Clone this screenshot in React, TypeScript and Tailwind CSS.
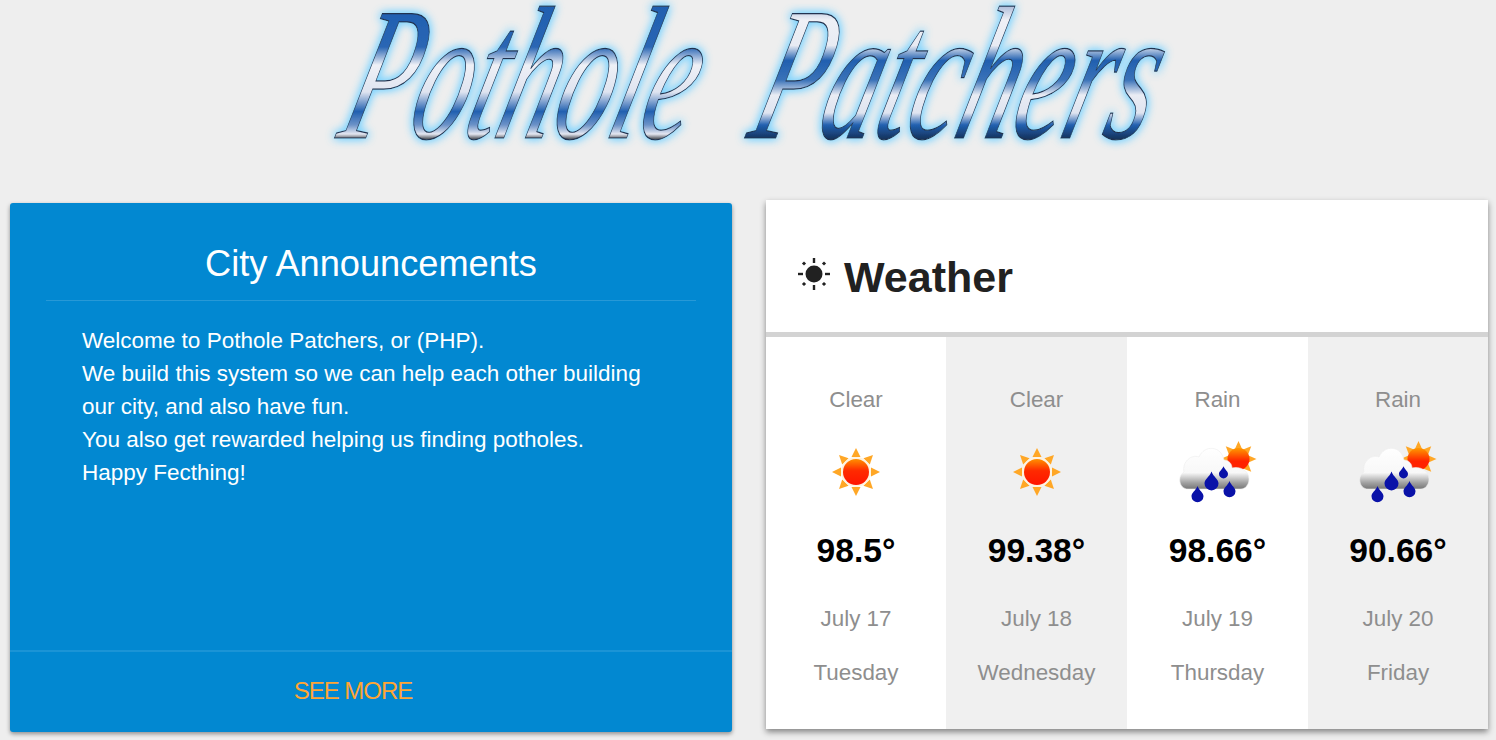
import { useId } from "react"

const days = [
    { sky: "Clear", temp: "98.5°", date: "July 17", day: "Tuesday", rain: false, shade: false },
    { sky: "Clear", temp: "99.38°", date: "July 18", day: "Wednesday", rain: false, shade: true },
    { sky: "Rain", temp: "98.66°", date: "July 19", day: "Thursday", rain: true, shade: false },
    { sky: "Rain", temp: "90.66°", date: "July 20", day: "Friday", rain: true, shade: true },
]

function Logo() {
    return (
        <svg width="860" height="170" viewBox="0 0 860 170" className="block">
            <defs>
                <linearGradient id="word1" gradientUnits="userSpaceOnUse" x1="0" y1="-133" x2="0" y2="17">
                    <stop offset="0" stopColor="#1f5fb0" />
                    <stop offset="0.28" stopColor="#2a66b4" />
                    <stop offset="0.4" stopColor="#eef0f6" />
                    <stop offset="0.58" stopColor="#dfe4f0" />
                    <stop offset="0.71" stopColor="#2160b0" />
                    <stop offset="0.8" stopColor="#6d93c8" />
                    <stop offset="0.86" stopColor="#e4e7f1" />
                    <stop offset="0.9" stopColor="#33363d" />
                </linearGradient>
                <linearGradient id="word2" gradientUnits="userSpaceOnUse" x1="0" y1="-133" x2="0" y2="17">
                    <stop offset="0" stopColor="#aab9d8" />
                    <stop offset="0.1" stopColor="#eef0f6" />
                    <stop offset="0.27" stopColor="#e8ebf3" />
                    <stop offset="0.37" stopColor="#2160b0" />
                    <stop offset="0.5" stopColor="#3a72b8" />
                    <stop offset="0.6" stopColor="#e9ecf4" />
                    <stop offset="0.72" stopColor="#dfe4f0" />
                    <stop offset="0.8" stopColor="#2160b0" />
                    <stop offset="0.89" stopColor="#16345f" />
                </linearGradient>
                <filter id="glow" x="-5%" y="-15%" width="110%" height="130%">
                    <feGaussianBlur in="SourceAlpha" stdDeviation="5" result="blur" />
                    <feFlood floodColor="#7fd4ff" />
                    <feComposite in2="blur" operator="in" result="halo" />
                    <feMerge>
                        <feMergeNode in="halo" />
                        <feMergeNode in="halo" />
                        <feMergeNode in="SourceGraphic" />
                    </feMerge>
                </filter>
            </defs>
            <g filter="url(#glow)" fontFamily="'Liberation Serif', serif" fontStyle="italic" fontSize="190" stroke="#23324f" strokeWidth="1.2">
                <text transform="translate(18 138) skewX(-16) scale(0.59 1)" fill="url(#word1)">Pothole</text>
                <text transform="translate(428 138) skewX(-16) scale(0.59 1)" fill="url(#word2)">Patchers</text>
            </g>
        </svg>
    )
}

function HeadingSun() {
    return (
        <svg width="36" height="36" viewBox="0 0 36 36" className="shrink-0" fill="#212121">
            <circle cx="18" cy="18" r="8.5" />
            <rect x="16.8" y="2" width="2.4" height="5" />
            <rect x="16.8" y="29" width="2.4" height="5" />
            <rect x="2" y="16.8" width="5" height="2.4" />
            <rect x="29" y="16.8" width="5" height="2.4" />
            <rect x="6.5" y="6" width="3" height="3" transform="rotate(45 8 7.5)" />
            <rect x="26.5" y="6" width="3" height="3" transform="rotate(45 28 7.5)" />
            <rect x="6.5" y="26.5" width="3" height="3" transform="rotate(45 8 28)" />
            <rect x="26.5" y="26.5" width="3" height="3" transform="rotate(45 28 28)" />
        </svg>
    )
}

function Rays({ cx, cy, inner, outer, half }: { cx: number; cy: number; inner: number; outer: number; half: number }) {
    return (
        <>
            {[0, 45, 90, 135, 180, 225, 270, 315].map((a) => (
                <polygon
                    key={a}
                    points={`${cx - half},${cy - inner} ${cx},${cy - outer} ${cx + half},${cy - inner}`}
                    fill="#ffa726"
                    transform={`rotate(${a} ${cx} ${cy})`}
                />
            ))}
        </>
    )
}

function SunIcon() {
    const id = useId()
    return (
        <svg width="50" height="50" viewBox="0 0 50 50" className="blur-[0.4px]">
            <defs>
                <linearGradient id={id} x1="0" y1="0" x2="0" y2="1">
                    <stop offset="0" stopColor="#ff9000" />
                    <stop offset="0.45" stopColor="#ff2a00" />
                    <stop offset="1" stopColor="#ff1500" />
                </linearGradient>
            </defs>
            <Rays cx={25} cy={25} inner={15} outer={24} half={4.5} />
            <circle cx="25" cy="25" r="15" fill="#fff3e0" />
            <circle cx="25" cy="25" r="13" fill={`url(#${id})`} />
        </svg>
    )
}

function Drop({ x, y, s }: { x: number; y: number; s: number }) {
    return (
        <path
            d={`M${x} ${y - s * 1.5} C${x + s * 0.3} ${y - s * 0.7} ${x + s} ${y - s * 0.4} ${x + s} ${y + s * 0.2} A${s} ${s} 0 1 1 ${x - s} ${y + s * 0.2} C${x - s} ${y - s * 0.4} ${x - s * 0.3} ${y - s * 0.7} ${x} ${y - s * 1.5}Z`}
            fill="#0a12a8"
        />
    )
}

function RainIcon() {
    const sun = useId()
    const cloud = useId()
    return (
        <svg width="80" height="66" viewBox="0 0 80 66" className="blur-[0.4px]">
            <defs>
                <linearGradient id={sun} x1="0" y1="0" x2="0" y2="1">
                    <stop offset="0" stopColor="#ff9a00" />
                    <stop offset="0.6" stopColor="#ff2200" />
                </linearGradient>
                <linearGradient id={cloud} x1="0" y1="0" x2="0" y2="1">
                    <stop offset="0" stopColor="#ffffff" />
                    <stop offset="0.6" stopColor="#f8f8f8" />
                    <stop offset="0.85" stopColor="#a0a0a0" />
                    <stop offset="1" stopColor="#777777" />
                </linearGradient>
            </defs>
            <Rays cx={60.5} cy={20} inner={10} outer={18} half={3.6} />
            <circle cx="60.5" cy="20" r="11" fill={`url(#${sun})`} />
            <path
                d="M10 50 C1 50 -1 37 6 33 C4 23 13 15 21 18 C26 6 43 6 46 21 C51 21 54 25 54 29 C61 27 71 31 71 40 C71 46 67 50 63 50 Z"
                fill={`url(#${cloud})`}
                stroke="#ececec"
                strokeWidth="0.6"
            />
            <Drop x={19.5} y={56} s={6} />
            <Drop x={33.5} y={43} s={7} />
            <Drop x={45.5} y={34} s={4.5} />
            <Drop x={51.5} y={51} s={6} />
        </svg>
    )
}

export default function App() {
    return (
        <div className="h-[740px] overflow-hidden bg-[#eeeeee] font-['Liberation_Sans',Arial,sans-serif]">
            <header className="flex h-[200px] justify-center pr-[2px]">
                <Logo />
            </header>
            <main className="flex items-start gap-[34px] pl-[10px] pr-[8px]">
                <section className="mt-[3px] flex h-[529px] w-[722px] flex-col rounded-[3px] bg-[#0288d1] text-white shadow-[0_2px_4px_rgba(0,0,0,0.4)]">
                    <h2 className="pt-[41px] text-center text-[36.2px] leading-[40px] font-normal">City Announcements</h2>
                    <div className="mx-[36px] mt-[16px] h-px bg-white/15"></div>
                    <div className="pl-[72px] pr-[60px] pt-[23px] text-[22.5px] leading-[33px]">
                        <p>Welcome to Pothole Patchers, or (PHP).</p>
                        <p>We build this system so we can help each other building our city, and also have fun.</p>
                        <p>You also get rewarded helping us finding potholes.</p>
                        <p>Happy Fecthing!</p>
                    </div>
                    <div className="mt-auto flex h-[82px] items-center justify-center border-t-2 border-white/10 pb-[2px] pr-[36px]">
                        <a href="#" className="text-[24px] leading-[28px] text-[#ffa534] tracking-[-1px]">SEE MORE</a>
                    </div>
                </section>
                <section className="flex h-[529px] w-[722px] flex-col bg-white shadow-[0_3px_6px_rgba(0,0,0,0.45)]">
                    <div className="flex h-[137px] items-center gap-[12px] border-b-[5px] border-[#d3d3d3] pl-[30px] pt-[16px]">
                        <HeadingSun />
                        <h2 className="mt-[6px] text-[43px] leading-[50px] font-bold text-[#212121]">Weather</h2>
                    </div>
                    <div className="grid flex-1 grid-cols-[180px_181px_181px_180px]">
                        {days.map((d) => (
                            <div key={d.date} className={`flex flex-col items-center pt-[50px] ${d.shade ? "bg-[#f0f0f0]" : "bg-white"}`}>
                                <div className="text-[22.4px] leading-[26px] text-[#8e8e8e]">{d.sky}</div>
                                <div className="mt-[23px] flex h-[72px] items-center justify-center">
                                    {d.rain ? <RainIcon /> : <SunIcon />}
                                </div>
                                <div className="mt-[23px] text-[33.6px] leading-[40px] font-bold text-black">{d.temp}</div>
                                <div className="mt-[35px] text-[22.4px] leading-[26px] text-[#8e8e8e]">{d.date}</div>
                                <div className="mt-[28px] text-[22.4px] leading-[26px] text-[#8e8e8e]">{d.day}</div>
                            </div>
                        ))}
                    </div>
                </section>
            </main>
        </div>
    )
}
